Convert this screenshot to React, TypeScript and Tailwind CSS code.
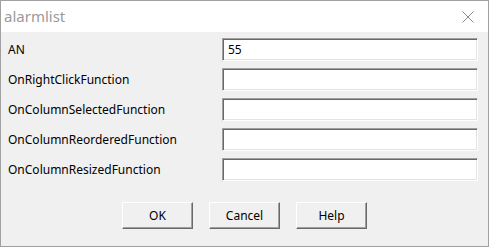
const fields = [
  { label: "AN", value: "55" },
  { label: "OnRightClickFunction", value: "" },
  { label: "OnColumnSelectedFunction", value: "" },
  { label: "OnColumnReorderedFunction", value: "" },
  { label: "OnColumnResizedFunction", value: "" },
];

function CloseIcon() {
  return (
    <svg width="12" height="12" viewBox="0 0 12 12" className="text-[#8a8a8a]">
      <path d="M0.5 0.5 L11.5 11.5 M11.5 0.5 L0.5 11.5" stroke="currentColor" strokeWidth="1" fill="none" />
    </svg>
  );
}

function DialogButton({ children }: { children: React.ReactNode }) {
  return (
    <button className="h-[27px] w-[71px] border border-t-white border-l-white border-b-[#696969] border-r-[#696969] bg-[#f0f0f0] text-[12px] text-black shadow-[inset_-1px_-1px_0_#a0a0a0]">
      {children}
    </button>
  );
}

export default function App() {
  return (
    <div className="flex h-[247px] w-[489px] flex-col border border-[#a0a0a0] bg-[#f0f0f0] font-['Noto_Sans','Segoe_UI',sans-serif]">
      <div className="flex h-[31px] items-center justify-between bg-white pl-[3px] pr-[14px]">
        <span className="text-[15px] text-[#9a9a9a]">alarmlist</span>
        <CloseIcon />
      </div>

      <div className="flex flex-col gap-[7px] pl-[7px] pr-[10px] pt-[6px]">
        {fields.map((f) => (
          <div key={f.label} className="flex items-center">
            <span className="flex-1 text-[12px] text-black">{f.label}</span>
            <div className="flex h-[23px] w-[256px] items-center border border-t-[#a0a0a0] border-l-[#a0a0a0] border-b-white border-r-white bg-white pl-[5px] text-[12px] text-black shadow-[inset_1px_1px_0_#696969,inset_-1px_-1px_0_#e3e3e3]">
              {f.value}
            </div>
          </div>
        ))}
      </div>

      <div className="mt-[21px] flex justify-center gap-[16px]">
        <DialogButton>OK</DialogButton>
        <DialogButton>Cancel</DialogButton>
        <DialogButton>Help</DialogButton>
      </div>
    </div>
  );
}
